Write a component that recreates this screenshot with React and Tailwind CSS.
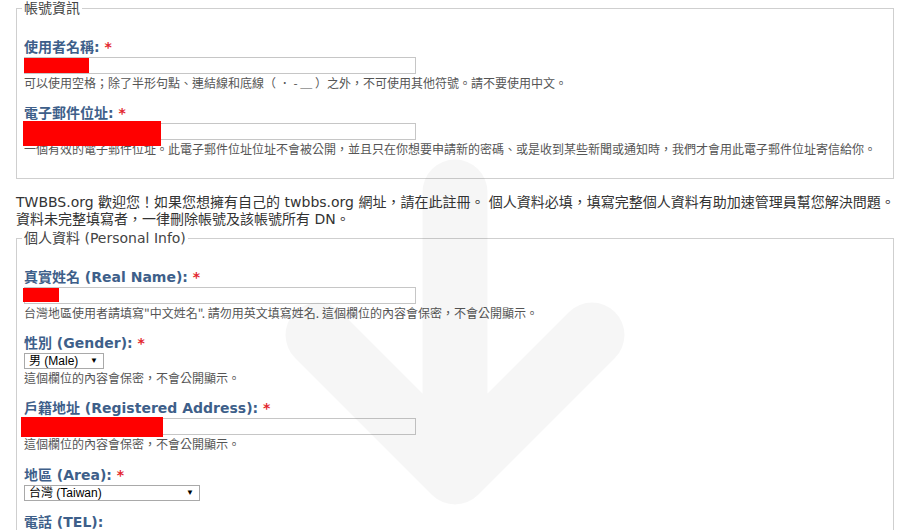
const cjk = { fontFamily: '"DejaVu Sans", "Noto Sans CJK TC", sans-serif' };
const small = { fontFamily: '"Noto Sans CJK TC", "Liberation Sans", sans-serif' };
const arial = { fontFamily: '"Liberation Sans", "Noto Sans CJK TC", sans-serif' };

function Label({ children, required }) {
  return (
    <div className="h-[18px] text-[14px] leading-[18px] font-bold text-[#3e5f8a] whitespace-nowrap" style={cjk}>
      {children}
      {required && <span className="text-[#e3262e]"> *</span>}
    </div>
  );
}

function Desc({ children }) {
  return (
    <div className="h-[18px] text-[12px] leading-[18px] text-[#555] whitespace-nowrap" style={small}>
      {children}
    </div>
  );
}

// redact = [left, top, width, height] of the red box over the input
function TextInput({ redact }) {
  return (
    <div className="relative mt-[1px] h-[17px] w-[392px] border border-[#c6c6c6] bg-white">
      {redact && (
        <div
          className="absolute bg-[#ff0000]"
          style={{ left: redact[0], top: redact[1], width: redact[2], height: redact[3] }}
        />
      )}
    </div>
  );
}

function FakeSelect({ value, width }) {
  return (
    <div
      className="mt-[1px] flex h-[16px] items-center justify-between border border-[#a9a9a9] bg-white pl-[4px] pr-[5px] text-[12px] leading-none text-black"
      style={{ width, ...arial }}
    >
      <span>{value}</span>
      <span className="text-[8px]">▼</span>
    </div>
  );
}

function Box({ legend, children, className = "" }) {
  return (
    <fieldset className={`ml-[16px] w-[878px] border border-[#cfcfcf] px-[7px] ${className}`}>
      <legend className="-ml-[2px] px-[2px] text-[14px] leading-[16px] text-[#444]" style={cjk}>
        {legend}
      </legend>
      {children}
    </fieldset>
  );
}

export default function App() {
  return (
    <div className="relative h-[530px] w-[900px] overflow-hidden bg-white">
      {/* account */}
      <Box legend="帳號資訊" className="pb-[20px]">
        <div className="pt-[22px]">
          <div className="mb-[12px]">
            <Label required>使用者名稱:</Label>
            <TextInput redact={[-1, 0, 65, 15]} />
            <Desc>可以使用空格；除了半形句點、連結線和底線（ ． - ＿ ）之外，不可使用其他符號。請不要使用中文。</Desc>
          </div>
          <div>
            <Label required>電子郵件位址:</Label>
            <TextInput redact={[-2, -3, 138, 25]} />
            <Desc>一個有效的電子郵件位址。此電子郵件位址位址不會被公開，並且只在你想要申請新的密碼、或是收到某些新聞或通知時，我們才會用此電子郵件位址寄信給你。</Desc>
          </div>
        </div>
      </Box>

      <p className="ml-[16px] mt-[15px] text-[14px] leading-[17px] text-[#333] whitespace-nowrap" style={cjk}>
        TWBBS.org 歡迎您！如果您想擁有自己的 twbbs.org 網址，請在此註冊。 個人資料必填，填寫完整個人資料有助加速管理員幫您解決問題。
        <br />
        資料未完整填寫者，一律刪除帳號及該帳號所有 DN。
      </p>

      {/* personal info */}
      <Box legend="個人資料 (Personal Info)" className="mt-[2px] pb-[40px]">
        <div className="pt-[22px]">
          <div className="mb-[12px]">
            <Label required>真實姓名 (Real Name):</Label>
            <TextInput redact={[-2, 0, 36, 14]} />
            <Desc>台灣地區使用者請填寫"中文姓名". 請勿用英文填寫姓名. 這個欄位的內容會保密，不會公開顯示。</Desc>
          </div>
          <div className="mb-[12px]">
            <Label required>性別 (Gender):</Label>
            <FakeSelect value="男 (Male)" width={80} />
            <Desc>這個欄位的內容會保密，不會公開顯示。</Desc>
          </div>
          <div className="mb-[13px]">
            <Label required>戶籍地址 (Registered Address):</Label>
            <TextInput redact={[-4, -2, 142, 20]} />
            <Desc>這個欄位的內容會保密，不會公開顯示。</Desc>
          </div>
          <div className="mb-[12px]">
            <Label required>地區 (Area):</Label>
            <FakeSelect value="台灣 (Taiwan)" width={176} />
          </div>
          <div>
            <Label>電話 (TEL):</Label>
          </div>
        </div>
      </Box>

      {/* faint scroll-down arrow laid over the page */}
      <svg className="pointer-events-none absolute left-0 top-0" width="900" height="530" viewBox="0 0 900 530">
        <path
          d="M455 192 V472 M318 335 L455 472 L592 335"
          fill="none"
          stroke="#000"
          strokeOpacity="0.035"
          strokeWidth="65"
          strokeLinecap="round"
          strokeLinejoin="round"
        />
      </svg>
    </div>
  );
}
